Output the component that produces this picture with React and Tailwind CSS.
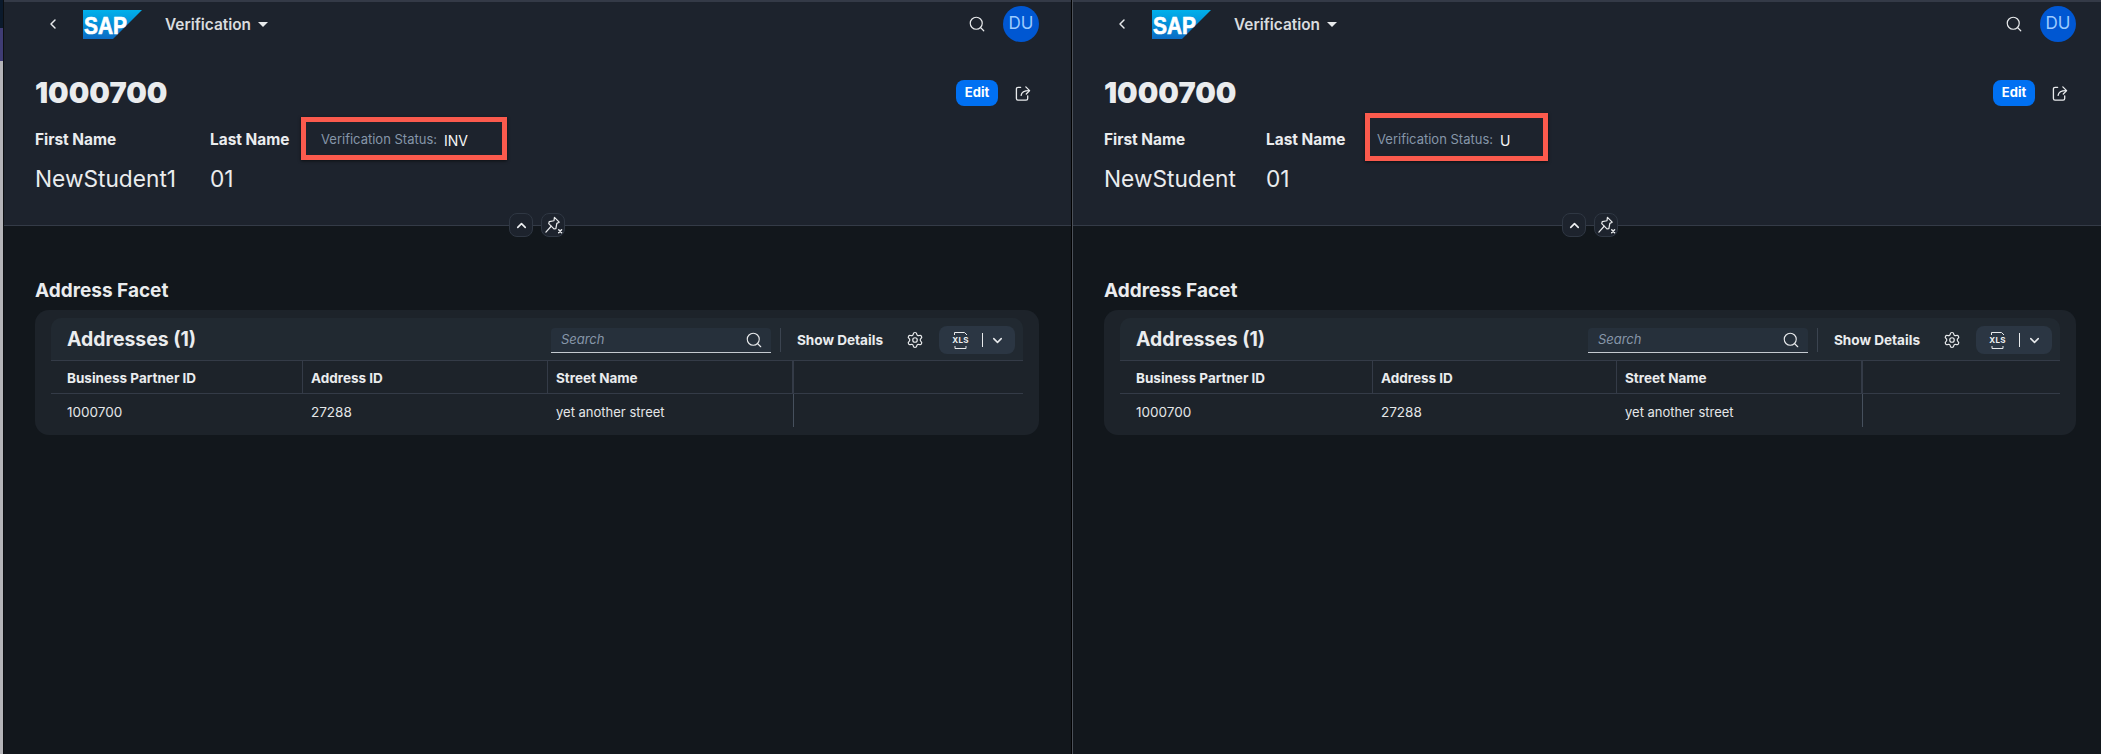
import { ChevronLeft, ChevronUp, ChevronDown, Search, Settings } from "lucide-react";

const SapLogo = () => (
  <svg width="59" height="29" viewBox="0 0 59 29">
    <defs>
      <linearGradient id="sapGrad" x1="0" y1="0" x2="0" y2="1">
        <stop offset="0" stopColor="#00b1eb" />
        <stop offset="1" stopColor="#0a6bc4" />
      </linearGradient>
    </defs>
    <polygon points="0,0 59,0 30,29 0,29" fill="url(#sapGrad)" />
    <text x="1" y="23.5" fill="#fff" stroke="#fff" strokeWidth="0.7" fontFamily="Liberation Sans, sans-serif" fontWeight="700" fontSize="24" textLength="43" lengthAdjust="spacingAndGlyphs">SAP</text>
  </svg>
);

const ShareIcon = () => (
  <svg width="16" height="18" viewBox="0 0 17 18" fill="none" stroke="#e8eaec" strokeWidth="1.4" strokeLinecap="round" strokeLinejoin="round">
    <path d="M6 3H3.2C2.2 3 1.5 3.7 1.5 4.7v10.1c0 1 .7 1.7 1.7 1.7h8.6c1 0 1.7-.7 1.7-1.7V12" />
    <path d="M6.5 11.500C7 8 9.500 6.500 15 6.500" />
    <path d="M11.500 2.500 15.500 6.500 12 10" />
  </svg>
);

const PinIcon = () => (
  <svg width="19" height="19" viewBox="0 0 20 20" fill="none" stroke="#e8eaec" strokeWidth="1.3" strokeLinejoin="round" strokeLinecap="round">
    <path d="M11 1.500 16 6.500 13.500 7.800 12.500 13.200 10.500 13.500 5 8 5.500 6 10.500 5z" />
    <path d="M7.500 10.800 2 17" />
    <path d="M15.500 14.500 18.500 17.500M18.500 14.500 15.500 17.500" strokeWidth="1.5" />
  </svg>
);

const XlsIcon = () => (
  <div className="relative flex h-[17px] w-[17px] flex-col items-center justify-between">
    <svg width="17" height="3" viewBox="0 0 17 3" fill="none" stroke="#e8eaec" strokeWidth="1">
      <path d="M2.500 3V.5h10L15 3" />
    </svg>
    <span className="text-[8px] leading-[8px] font-bold tracking-[0.2px] text-[#eef0f2]">XLS</span>
    <svg width="17" height="3" viewBox="0 0 17 3" fill="none" stroke="#e8eaec" strokeWidth="1">
      <path d="M3 0v2.500h11V0" />
    </svg>
  </div>
);

const Pane = ({ first, status, paneClass, navClass, backClass, nameCol, box, gridCols }) => (
  <div className={"flex h-full flex-col bg-[#12171c] " + paneClass}>
    <div className="h-[2px] bg-[#343a47]"></div>

    {/* object page header */}
    <div className="relative h-[224px] border-b border-[#343b47] bg-[#1d232d]">
      <div className={"flex h-[44px] items-center justify-between " + navClass}>
        <div className={"flex items-center " + backClass}>
          <ChevronLeft size={16} color="#e8eaec" strokeWidth={2.2} />
          <div className="ml-[22px] flex">
            <SapLogo />
          </div>
          <span className="ml-[23px] pt-[1px] text-[15.400px] font-semibold text-[#d9dcdf]">Verification</span>
          <span className="mt-[1px] ml-[7px] h-0 w-0 border-x-[5px] border-t-[5px] border-x-transparent border-t-[#e8eaec]"></span>
        </div>
        <div className="flex items-center gap-[17px]">
          <Search size={18} color="#e8eaec" strokeWidth={1.6} />
          <div className="flex h-[36px] w-[36px] items-center justify-center rounded-full bg-[#0057d2] text-[17px] text-[#9ccbff]">DU</div>
        </div>
      </div>

      <div className={"mt-[34px] flex h-[26px] items-center justify-between " + navClass}>
        <h1 className="ml-[-1px] text-[29px] leading-[26px] font-black text-[#eaecee]">1000700</h1>
        <div className="mr-[8px] flex items-center gap-[17px]">
          <button className="h-[26px] w-[42px] rounded-[8px] bg-[#0070f2] text-[13px] font-bold text-white">Edit</button>
          <ShareIcon />
        </div>
      </div>

      <div className={"mt-[23px] flex " + navClass}>
        <div className={nameCol}>
          <div className="ml-[-1px] h-[22px] text-[15.400px] leading-[22px] font-bold text-[#eaecee]">First Name</div>
          <div className="mt-[17px] ml-[-1px] h-[22px] text-[22.700px] leading-[22px] text-[#eaecee]">{first}</div>
        </div>
        <div className="w-[111px]">
          <div className="h-[22px] text-[15.400px] leading-[22px] font-bold text-[#eaecee]">Last Name</div>
          <div className="mt-[17px] h-[22px] text-[22.700px] leading-[22px] text-[#eaecee]">01</div>
        </div>
        <div className="relative flex h-[22px] items-center">
          <span className="w-[123px] text-[13px] text-[#8696a9]">Verification Status:</span>
          <span className="text-[14px] text-[#f5f6f7]">{status}</span>
          <div className={"absolute border-[5px] border-[#fb5a4d] shadow-[0_1px_3px_rgba(0,0,0,0.6)] " + box}></div>
        </div>
      </div>

      <div className={"absolute top-[211px] flex gap-[8px] " + (first === "NewStudent1" ? "left-[505px]" : "left-[489px]")}>
        <div className="flex h-[24px] w-[24px] items-center justify-center rounded-[8px] border border-[#2f3743] bg-[#1d232d]">
          <ChevronUp size={15} color="#eef0f2" strokeWidth={2.6} />
        </div>
        <div className="flex h-[24px] w-[24px] items-center justify-center rounded-[8px] border border-[#2f3743] bg-[#1d232d]">
          <PinIcon />
        </div>
      </div>
    </div>

    {/* section */}
    <div className={navClass}>
      <h2 className="mt-[54px] ml-[-1px] h-[22px] text-[19px] leading-[22px] font-bold text-[#eaecee]">Address Facet</h2>
      <div className="mt-[8px] ml-[-1px] h-[125px] rounded-[14px] bg-[#1d232a] px-[16px] pt-[8px]">
        <div className="flex h-[43px] items-center rounded-t-[10px] border-b border-[#343b47] bg-[#212931] pt-[2px] pr-[8px] pl-[16px]">
          <h3 className="text-[19.400px] font-bold text-[#eaecee]">Addresses (1)</h3>
          <div className="ml-auto flex h-[25px] w-[220px] items-center justify-between rounded-t-[4px] border-b border-[#c4cad0] bg-[#26303b] pr-[8px] pl-[10px]">
            <span className="text-[13px] text-[#8696a9] italic">Search</span>
            <Search size={18} color="#e8eaec" strokeWidth={1.5} />
          </div>
          <div className="mr-[8px] ml-[9px] h-[24px] w-px bg-[#3b4450]"></div>
          <span className="ml-[8px] text-[13.600px] font-bold text-[#eaecee]">Show Details</span>
          <div className="ml-[23px] flex">
            <Settings size={18} color="#e8eaec" strokeWidth={1.6} />
          </div>
          <div className="ml-[15px] flex h-[28px] w-[76px] items-center rounded-[8px] bg-[#2b3643] pl-[13px]">
            <XlsIcon />
            <div className="ml-[13px] h-[14px] w-px bg-[#e8eaec]"></div>
            <div className="ml-[7px] flex">
              <ChevronDown size={15} color="#e8eaec" strokeWidth={2.4} />
            </div>
          </div>
        </div>
        <div className={"grid h-[33px] border-b border-[#343b47] text-[13.500px] font-bold text-[#eaecee] " + gridCols}>
          <div className="flex items-center border-r border-[#343b47] pt-[2px] pl-[16px]">Business Partner ID</div>
          <div className="flex items-center border-r border-[#343b47] pt-[2px] pl-[8px]">Address ID</div>
          <div className="flex items-center border-r-2 border-[#343b47] pt-[2px] pl-[8px]">Street Name</div>
          <div></div>
        </div>
        <div className={"grid h-[33px] text-[#e4e6e8] " + gridCols}>
          <div className="flex items-center pt-[4px] pl-[16px] text-[13.500px]">1000700</div>
          <div className="flex items-center pt-[4px] pl-[8px] text-[13.500px]">27288</div>
          <div className="flex items-center border-r border-[#46505d] pt-[4px] pl-[8px] text-[13px]">yet another street</div>
          <div></div>
        </div>
      </div>
    </div>
  </div>
);

export default function App() {
  return (
    <div className="flex h-[754px] w-[2101px] overflow-hidden bg-[#12171c] font-['Inter',sans-serif]">
      <div className="flex w-[3px] flex-col bg-[#b4b4b8]">
        <div className="h-[28px] bg-[#0b1a2c]"></div>
        <div className="h-[33px] bg-[#3f3c74]"></div>
      </div>
      <div className="w-px bg-[#0c0f12]"></div>
      <Pane
        first="NewStudent1"
        status="INV"
        paneClass="w-[1067px]"
        navClass="pr-[32px] pl-[32px]"
        backClass="ml-[9px]"
        nameCol="w-[174px]"
        box="top-[-12px] left-[-20px] h-[43px] w-[206px]"
        gridCols="grid-cols-[252px_245px_246px_1fr]"
      />
      <div className="w-px bg-[#000000]"></div>
      <div className="w-px bg-[#4c5159]"></div>
      <Pane
        first="NewStudent"
        status="U"
        paneClass="w-[1028px]"
        navClass="pr-[25px] pl-[32px]"
        backClass="ml-[9px]"
        nameCol="w-[161px]"
        box="top-[-16px] left-[-12px] h-[48px] w-[183px]"
        gridCols="grid-cols-[253px_244px_246px_1fr]"
      />
    </div>
  );
}
